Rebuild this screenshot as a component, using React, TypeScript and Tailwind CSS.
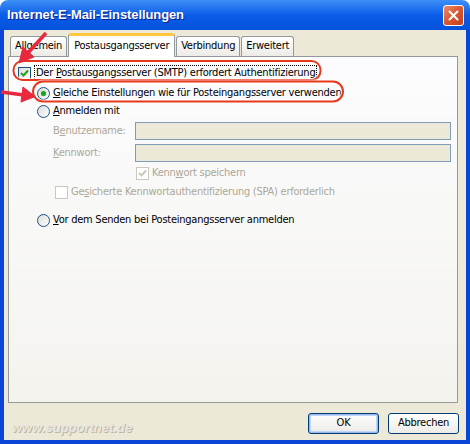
import React from 'react'

const font = { fontFamily: '"DejaVu Sans Condensed", "Liberation Sans", Arial, sans-serif' }

function Check({ checked, disabled }: { checked?: boolean; disabled?: boolean }) {
  return (
    <span
      className={
        'w-[13px] h-[13px] shrink-0 border flex items-center justify-center ' +
        (disabled
          ? 'border-[#cac8bb] bg-white'
          : 'border-[#1c5180] bg-gradient-to-br from-[#dcdcd7] to-white')
      }
    >
      {checked && (
        <svg width="9" height="9" viewBox="0 0 9 9">
          <path
            d="M1 4 L3.5 6.5 L8 1.5"
            fill="none"
            stroke={disabled ? '#cac8bb' : '#21a121'}
            strokeWidth="2"
          />
        </svg>
      )}
    </span>
  )
}

function Radio({ checked }: { checked?: boolean }) {
  return (
    <span className="w-[13px] h-[13px] shrink-0 rounded-full border border-[#1c5180] bg-gradient-to-br from-[#dcdcd7] to-white flex items-center justify-center">
      {checked && <span className="w-[5px] h-[5px] rounded-full bg-[#21a121] shadow-[0_0_1px_#55d451]" />}
    </span>
  )
}

function Tab({ label, active }: { label: string; active?: boolean }) {
  if (active) {
    return (
      <div className="relative z-10 h-[24px] -mb-px px-[5px] flex items-center bg-white border border-b-0 border-[#919b9c] rounded-t-[3px] border-t-[3px] border-t-[#ffc83c] text-black">
        {label}
      </div>
    )
  }
  return (
    <div className="h-[20px] px-[4px] flex items-center bg-gradient-to-b from-white to-[#ecebe6] border border-b-0 border-[#919b9c] rounded-t-[3px] text-black">
      {label}
    </div>
  )
}

export default function App() {
  return (
    <div
      className="relative w-[470px] h-[444px] flex flex-col overflow-hidden text-[11px] tracking-[-0.25px] bg-white"
      style={font}
    >
      {/* Titelleiste */}
      <div className="h-[30px] shrink-0 rounded-t-[8px] bg-gradient-to-b from-[#3d8ff7] via-[#0b5ce8] to-[#0452dc] flex items-center justify-between pl-[7px] pr-[6px]">
        <span
          className="text-white font-bold text-[13px] tracking-[-0.1px] [text-shadow:1px_1px_0_#0a1e8c]"
          style={{ fontFamily: '"Liberation Sans", Arial, sans-serif' }}
        >
          Internet-E-Mail-Einstellungen
        </span>
        <div className="w-[21px] h-[21px] rounded-[3px] border border-white bg-gradient-to-br from-[#ec8a6b] via-[#d9562f] to-[#c2401e] flex items-center justify-center">
          <svg width="11" height="11" viewBox="0 0 11 11">
            <path d="M1.5 1.5 L9.5 9.5 M9.5 1.5 L1.5 9.5" stroke="white" strokeWidth="2" strokeLinecap="round" />
          </svg>
        </div>
      </div>

      {/* Fensterinhalt */}
      <div className="flex-1 flex flex-col bg-[#ece9d8] border-x-4 border-b-4 border-[#0b45d8]">
        <div className="flex items-end gap-[1px] mt-[3px] pl-[6px]">
          <Tab label="Allgemein" />
          <Tab label="Postausgangsserver" active />
          <Tab label="Verbindung" />
          <Tab label="Erweitert" />
        </div>

        <div className="ml-[4px] mr-[8px] h-[347px] border border-[#919b9c] bg-gradient-to-b from-[#fcfcfe] to-[#f4f3ee] flex flex-col">
          <div className="mt-[8px] ml-[9px] h-[16px] flex items-center gap-[3px]">
            <Check checked />
            <span className="border border-dotted border-black px-[1px] leading-[14px]">
              Der <u>P</u>ostausgangsserver (SMTP) erfordert Authentifizierung
            </span>
          </div>

          <div className="mt-[4px] ml-[28px] h-[16px] flex items-center gap-[3px]">
            <Radio checked />
            <span>
              <u>G</u>leiche Einstellungen wie für Posteingangsserver verwenden
            </span>
          </div>

          <div className="mt-[2px] ml-[28px] h-[16px] flex items-center gap-[3px]">
            <Radio />
            <span>
              <u>A</u>nmelden mit
            </span>
          </div>

          <div className="mt-[3px] ml-[44px] flex items-center">
            <span className="w-[82px] text-[#aca899]">
              B<u>e</u>nutzername:
            </span>
            <div className="w-[316px] h-[18px] border border-[#7f9db9] bg-[#ece9d8]" />
          </div>

          <div className="mt-[4px] ml-[44px] flex items-center">
            <span className="w-[82px] text-[#aca899]">
              <u>K</u>ennwort:
            </span>
            <div className="w-[316px] h-[18px] border border-[#7f9db9] bg-[#ece9d8]" />
          </div>

          <div className="mt-[3px] ml-[127px] h-[16px] flex items-center gap-[3px] text-[#aca899]">
            <Check checked disabled />
            <span>
              Kenn<u>w</u>ort speichern
            </span>
          </div>

          <div className="mt-[3px] ml-[46px] h-[16px] flex items-center gap-[3px] text-[#aca899]">
            <Check disabled />
            <span>
              Ge<u>s</u>icherte Kennwortauthentifizierung (SPA) erforderlich
            </span>
          </div>

          <div className="mt-[12px] ml-[28px] h-[16px] flex items-center gap-[3px]">
            <Radio />
            <span>
              <u>V</u>or dem Senden bei Posteingangsserver anmelden
            </span>
          </div>
        </div>

        <div className="flex-1 flex items-start justify-between pt-[10px] pl-[8px] pr-[7px]">
          <span
            className="mt-[5px] font-bold italic text-[13px] tracking-normal text-[#e9e6dc] [text-shadow:1px_1px_0_#bab6a6]"
            style={{ fontFamily: '"Liberation Sans", Arial, sans-serif' }}
          >
            www.supportnet.de
          </span>
          <div className="flex gap-[9px]">
            <button className="w-[71px] h-[21px] rounded-[3px] border border-[#003c74] bg-gradient-to-b from-white to-[#ecebe6] shadow-[inset_0_0_0_1px_#98b8ea,inset_0_0_0_2px_#c1d3fb] text-black">
              OK
            </button>
            <button className="w-[71px] h-[21px] rounded-[3px] border border-[#003c74] bg-gradient-to-b from-white to-[#ecebe6] text-black">
              Abbrechen
            </button>
          </div>
        </div>
      </div>

      {/* Markierungen */}
      <svg className="absolute inset-0 pointer-events-none" width="470" height="444" viewBox="0 0 470 444">
        <g fill="none">
          <rect x="13.5" y="61" width="307" height="19" rx="9" stroke="white" strokeOpacity="0.7" strokeWidth="4" />
          <rect x="13.5" y="61" width="307" height="19" rx="9" stroke="#e8381c" strokeWidth="2" />
          <rect x="33" y="81.5" width="310" height="20" rx="10" stroke="white" strokeOpacity="0.7" strokeWidth="4" />
          <rect x="33" y="81.5" width="310" height="20" rx="10" stroke="#e8381c" strokeWidth="2" />
        </g>
        <g fill="#e8283c" stroke="#e8283c">
          <line x1="46" y1="33" x2="27" y2="54" strokeWidth="3.5" />
          <polygon points="19,63 34,57 23,47" />
          <line x1="1" y1="92" x2="24" y2="95" strokeWidth="3.5" />
          <polygon points="35,96.5 21,102 23,87" />
        </g>
      </svg>
    </div>
  )
}
